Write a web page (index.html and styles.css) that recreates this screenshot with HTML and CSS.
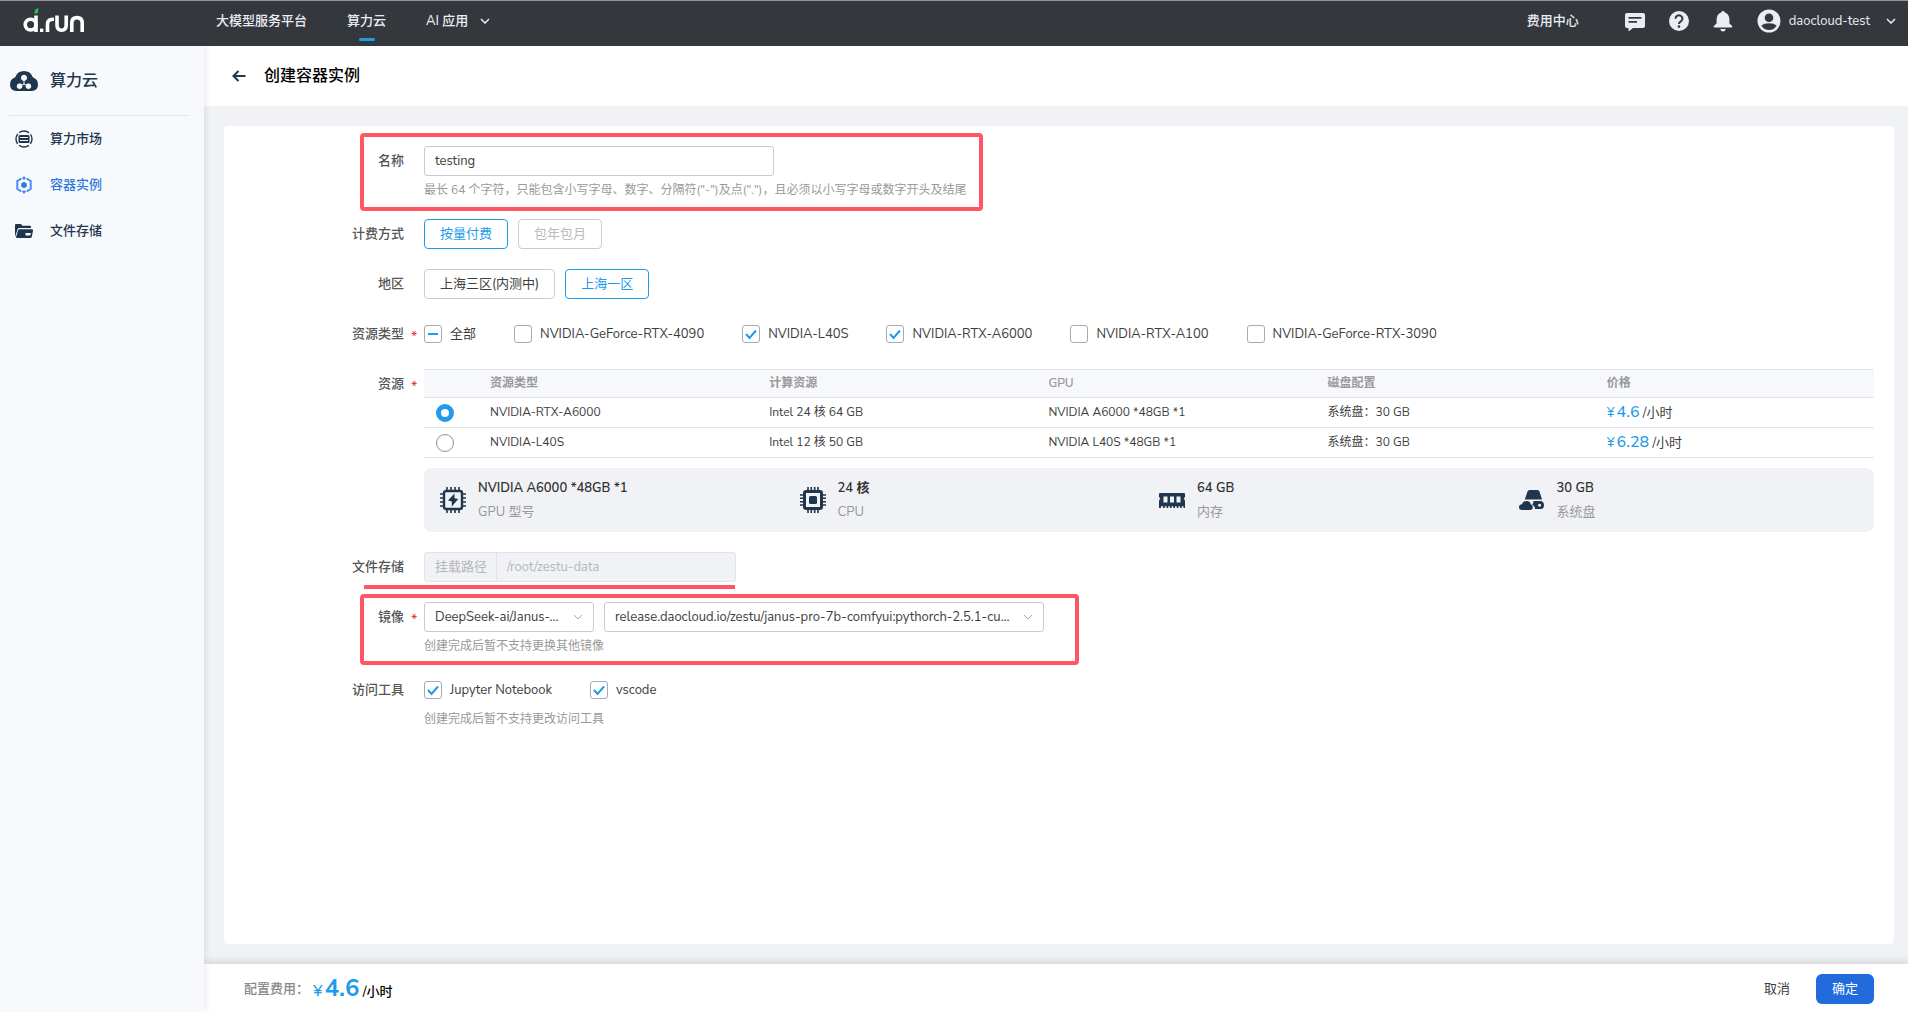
FILE: index.html
```html
<!DOCTYPE html>
<html lang="zh-CN">
<head>
<meta charset="utf-8">
<meta name="viewport" content="width=device-width, initial-scale=1">
<title>创建容器实例 - d.run</title>
<link rel="stylesheet" href="styles.css">
</head>
<body>
<div class="app">
  <header class="topbar">
    <a class="logo" href="#" aria-label="d.run">
      <svg width="64" height="26" viewBox="0 0 64 26" fill="none" stroke="#fff" stroke-width="3.6">
        <circle cx="7.6" cy="16.6" r="5.4"/>
        <path d="M13 7.500V24"/>
        <path d="M11.300 5.500L12.200 1.500 15.600 0 14.600 5.500z" fill="#1fc653" stroke="none"/>
        <path d="M17 20.600h3.300v3.400H17z" fill="#fff" stroke="none"/>
        <path d="M24.500 24v-8q0-5 6.500-4.800"/>
        <path d="M34 7.400v9.600q0 5.200 4.600 5.200t4.600-5.200V7.400"/>
        <path d="M48.800 24v-9q0-5.400 5.200-5.400t5.200 5.400v9"/>
      </svg>
    </a>
    <nav class="mainnav">
      <a href="#">大模型服务平台</a>
      <a href="#" class="active">算力云</a>
      <a href="#">AI 应用
        <svg class="chev" width="10" height="6" viewBox="0 0 10 6"><path d="M1 1l4 4 4-4"/></svg>
      </a>
    </nav>
    <div class="tools">
      <a href="#" class="billing">费用中心</a>
      <button type="button" aria-label="消息">
        <svg width="20" height="20" viewBox="0 0 20 20"><path fill="currentColor" fill-rule="evenodd" d="M2 2h16a2 2 0 0 1 2 2v11a2 2 0 0 1-2 2H8l-4.500 3.500V17H2a2 2 0 0 1-2-2V4a2 2 0 0 1 2-2zm1.500 4v1.700h13V6zm0 4v1.700h8.500V10z"/></svg>
      </button>
      <button type="button" aria-label="帮助">
        <svg width="20" height="20" viewBox="0 0 20 20"><circle cx="10" cy="10" r="10" fill="currentColor"/><path d="M6.500 7.700a3.500 3.300 0 1 1 5.600 2.500Q10 11.400 10 13" fill="none" stroke="#34383d" stroke-width="2"/><circle cx="10" cy="15.600" r="1.300" fill="#34383d"/></svg>
      </button>
      <button type="button" aria-label="通知">
        <svg width="20" height="22" viewBox="0 0 20 22"><path fill="currentColor" d="M10 1q1.600 0 1.900 1.600Q16 4 16.400 9v4.500l2.800 2.600q.5 1.400-.7 1.400h-17q-1.200 0-.7-1.400l2.800-2.600V9Q4 4 8.100 2.600 8.400 1 10 1zM7.200 19h5.600q-.8 2.500-2.800 2.500T7.200 19z"/></svg>
      </button>
      <button type="button" class="user">
        <svg width="24" height="24" viewBox="0 0 24 24"><circle cx="12" cy="12" r="11.500" fill="currentColor"/><circle cx="12" cy="8.800" r="4.300" fill="#34383d"/><path d="M4.300 16.500Q7 14.300 12 14.300t7.700 2.200Q17 21 12 21t-7.700-4.500z" fill="#34383d"/></svg>
        <span>daocloud-test</span>
        <svg class="chev" width="10" height="6" viewBox="0 0 10 6"><path d="M1 1l4 4 4-4"/></svg>
      </button>
    </div>
  </header>

  <aside class="sidebar">
    <h2>
      <svg width="28" height="20" viewBox="0 0 28 20"><path fill="#1f364d" d="M14 0q6.500 0 8.800 6.200Q28 8 28 13.500 28 20 21.500 20h-15Q0 20 0 13.500 0 8 5.200 6.200 7.500 0 14 0z"/><g stroke="#f7f9fd" fill="#f7f9fd"><path d="M14 7v6l-5 2.500M14 13l5 2.500" fill="none"/><circle cx="14" cy="6.800" r="2.600"/><circle cx="9.600" cy="15.200" r="2.400"/><circle cx="18.400" cy="15.200" r="2.400"/></g></svg>
      <span>算力云</span>
    </h2>
    <nav class="sidenav">
      <a href="#">
        <svg width="18" height="18" viewBox="0 0 18 18"><circle cx="9" cy="9" r="8" fill="none" stroke="currentColor" stroke-width="1.400" stroke-dasharray="10.560 2" stroke-dashoffset="5.300"/><path fill="currentColor" fill-rule="evenodd" d="M5 5h8q1.500 0 1.500 1.500v5.500Q14.500 13 13 13H5q-1.500 0-1.500-1.500V6.500Q3.500 5 5 5zM5 6.900v1h8v-1zM5 10.100v1h8v-1z"/></svg>
        <span>算力市场</span>
      </a>
      <a href="#" class="current">
        <svg width="18" height="18" viewBox="0 0 18 18"><path d="M6.300 2.700L2.300 5v8l4 2.300M11.700 2.700l4 2.300v8l-4 2.300" fill="none" stroke="#4a8df0" stroke-width="2"/><path d="M6.800 2.600L9 0l2.200 2.600L9 3.800zM6.800 15.400L9 18l2.200-2.600L9 14.200z" fill="#4a8df0"/><path d="M9 5.800l2.800 1.600v3.200L9 12.200l-2.800-1.600V7.400z" fill="currentColor"/></svg>
        <span>容器实例</span>
      </a>
      <a href="#">
        <svg width="18" height="14" viewBox="0 0 18 14"><path fill="currentColor" fill-rule="evenodd" d="M0 1q0-1 1-1h5l1.500 1.800H15q1 0 1 1V4H4.500Q3 4 2.600 5.300L0 13zM4.800 5.300H17q1.200 0 1 1.200l-1.200 6.300Q16.500 14 15.300 14H2q-1.200 0-.9-1.200L3 6.600Q3.400 5.300 4.800 5.300zM10.500 9v2.600h4.700L16 9z"/></svg>
        <span>文件存储</span>
      </a>
    </nav>
  </aside>

  <main class="main">
    <div class="pagehead">
      <button type="button" aria-label="返回">
        <svg width="14" height="12" viewBox="0 0 14 12"><path d="M13.500 6H1.500M6.500 1l-5 5 5 5" fill="none" stroke="#1f364d" stroke-width="2"/></svg>
      </button>
      <h1>创建容器实例</h1>
    </div>

    <div class="content">
      <form class="card" id="create">
        <div class="row">
          <span class="mark mark-name"></span>
          <label class="lbl" for="name">名称</label>
          <div class="ctl">
            <input class="text" id="name" type="text" value="testing">
            <p class="hint">最长 64 个字符，只能包含小写字母、数字、分隔符("-")及点(".")，且必须以小写字母或数字开头及结尾</p>
          </div>
        </div>

        <div class="row">
          <span class="lbl">计费方式</span>
          <div class="ctl choices">
            <button type="button" class="choice on">按量付费</button>
            <button type="button" class="choice" disabled>包年包月</button>
          </div>
        </div>

        <div class="row">
          <span class="lbl">地区</span>
          <div class="ctl choices">
            <button type="button" class="choice">上海三区(内测中)</button>
            <button type="button" class="choice on">上海一区</button>
          </div>
        </div>

        <div class="row">
          <span class="lbl req">资源类型</span>
          <div class="ctl checks">
            <label><input type="checkbox" class="partial">全部</label>
            <label><input type="checkbox">NVIDIA-GeForce-RTX-4090</label>
            <label><input type="checkbox" checked>NVIDIA-L40S</label>
            <label><input type="checkbox" checked>NVIDIA-RTX-A6000</label>
            <label><input type="checkbox">NVIDIA-RTX-A100</label>
            <label><input type="checkbox">NVIDIA-GeForce-RTX-3090</label>
          </div>
        </div>

        <div class="row">
          <span class="lbl req">资源</span>
          <div class="ctl">
            <table class="grid">
              <thead>
                <tr><th class="pick"></th><th>资源类型</th><th>计算资源</th><th>GPU</th><th>磁盘配置</th><th>价格</th></tr>
              </thead>
              <tbody>
                <tr>
                  <td class="pick"><input type="radio" name="res" aria-label="NVIDIA-RTX-A6000" checked></td>
                  <td>NVIDIA-RTX-A6000</td><td>Intel 24 核 64 GB</td><td>NVIDIA A6000 *48GB *1</td><td>系统盘：30 GB</td>
                  <td class="price"><span class="yen">¥</span><b>4.6</b> /小时</td>
                </tr>
                <tr>
                  <td class="pick"><input type="radio" name="res" aria-label="NVIDIA-L40S"></td>
                  <td>NVIDIA-L40S</td><td>Intel 12 核 50 GB</td><td>NVIDIA L40S *48GB *1</td><td>系统盘：30 GB</td>
                  <td class="price"><span class="yen">¥</span><b>6.28</b> /小时</td>
                </tr>
              </tbody>
            </table>
            <div class="summary">
              <div class="spec">
                <svg width="26" height="26" viewBox="0 0 26 26"><path d="M7 0v26M11 0v26M15 0v26M19 0v26M0 7h26M0 11h26M0 15h26M0 19h26" stroke="#1f364d" stroke-width="1.600"/><rect x="4" y="4" width="18" height="18" rx="2" fill="#f1f2f6" stroke="#1f364d" stroke-width="2.400"/><path d="M14.500 6.500L8 13.500l3.800 1V19.500L18.300 12l-3.800-.8z" fill="#1f364d"/></svg>
                <div><strong>NVIDIA A6000 *48GB *1</strong><span>GPU 型号</span></div>
              </div>
              <div class="spec">
                <svg width="26" height="26" viewBox="0 0 26 26"><path d="M8 0v26M11.300 0v26M14.700 0v26M18 0v26M0 8h26M0 11.300h26M0 14.700h26M0 18h26" stroke="#1f364d" stroke-width="1.600"/><rect x="4.500" y="4.500" width="17" height="17" rx="1.500" fill="#f1f2f6" stroke="#1f364d" stroke-width="3"/><rect x="9" y="9" width="8" height="8" rx="1.500" fill="#1f364d"/></svg>
                <div><strong>24 核</strong><span>CPU</span></div>
              </div>
              <div class="spec">
                <svg width="26" height="26" viewBox="0 0 26 26"><path fill="#1f364d" fill-rule="evenodd" d="M1 6h24q1 0 1 1v3q-2 1.700 0 3.400V21h-1.500v-1.700h-1.700V21h-1.700v-1.700h-1.700V21h-1.700v-1.700H16V21h-1.700v-1.700h-1.700V21h-1.700v-1.700H9.200V21H7.500v-1.700H5.800V21H4.100v-1.700H2V21H0v-7.600Q2 11.700 0 10V7q0-1 1-1zM4.500 9.500v6h4v-6zM11 9.500v6h4v-6zM17.500 9.500v6h4v-6z"/></svg>
                <div><strong>64 GB</strong><span>内存</span></div>
              </div>
              <div class="spec">
                <svg width="26" height="26" viewBox="0 0 26 26"><path fill="#1f364d" fill-rule="evenodd" d="M8.500 4.500Q9 3 10.500 3h8q1.500 0 2 1.500L23 12.500H5.800zM14.500 14H22q3 .7 3 4.300 0 3.700-3 3.700h-6q0-2.500-2.700-4.500 1.200-1.300 1.200-3.500zM20.500 16.700a1.500 1.500 0 1 0 .1 0zM7.500 14q3.500 0 4.300 3.300 2 .7 2 2.900Q13.800 23 11 23H3q-3 0-3-2.800t3-3Q4 14 7.500 14z"/></svg>
                <div><strong>30 GB</strong><span>系统盘</span></div>
              </div>
            </div>
          </div>
        </div>

        <div class="row">
          <span class="mark mark-line"></span>
          <label class="lbl" for="mount">文件存储</label>
          <div class="ctl">
            <div class="addon"><span>挂载路径</span><input id="mount" type="text" value="/root/zestu-data" disabled></div>
          </div>
        </div>

        <div class="row">
          <span class="mark mark-image"></span>
          <label class="lbl req" for="image">镜像</label>
          <div class="ctl">
            <div class="selects">
              <select id="image" class="sel-repo"><option>DeepSeek-ai/Janus-...</option></select>
              <select class="sel-tag" aria-label="镜像版本"><option>release.daocloud.io/zestu/janus-pro-7b-comfyui:pythorch-2.5.1-cu...</option></select>
            </div>
            <p class="hint">创建完成后暂不支持更换其他镜像</p>
          </div>
        </div>

        <div class="row">
          <span class="lbl">访问工具</span>
          <div class="ctl">
            <div class="checks">
              <label><input type="checkbox" checked>Jupyter Notebook</label>
              <label><input type="checkbox" checked>vscode</label>
            </div>
            <p class="hint">创建完成后暂不支持更改访问工具</p>
          </div>
        </div>
      </form>
    </div>

    <footer class="actions">
      <span class="cost">配置费用：</span>
      <span class="total"><span class="yen">¥</span><b>4.6</b> /小时</span>
      <button type="button" class="cancel">取消</button>
      <button type="submit" form="create" class="ok">确定</button>
    </footer>
  </main>
</div>
</body>
</html>
```
FILE: styles.css
```css
:root {
  --ink: #1f364d;
  --text: #3d3d3d;
  --muted: #999;
  --blue: #1f9bea;
  --line: #c8cad8;
  --panel: #f1f2f6;
  --mark: #ff5564;
}

* { box-sizing: border-box; }

body {
  margin: 0;
  font: 13px/20px "Nunito Sans", Nunito, Lato, "Noto Sans CJK SC", sans-serif;
  color: var(--text);
}

h1, h2, p { margin: 0; font-weight: 500; }
a { color: inherit; text-decoration: none; }
svg { flex: none; }
button, input, select { font: inherit; color: inherit; margin: 0; }
button { padding: 0; border: 0; background: none; }

.app {
  display: grid;
  grid-template: 46px 1fr / 204px 1fr;
  min-height: 100vh;
}

/* top bar */
.topbar {
  grid-column: 1 / -1;
  display: flex;
  align-items: center;
  padding: 0 12px 6px 23px;
  border-top: 1px solid #8d9799;
  background: #34383d;
  color: #e9edf5;
}
.logo { width: 193px; height: 26px; }
.mainnav { display: flex; gap: 40px; font-weight: 500; }
.mainnav a { position: relative; display: flex; align-items: center; gap: 12px; }
.mainnav .active::after {
  content: "";
  position: absolute;
  left: 50%;
  bottom: -10px;
  width: 16px;
  height: 3px;
  margin-left: -8px;
  border-radius: 2px;
  background: var(--blue);
}
.chev path { fill: none; stroke: currentColor; stroke-width: 1.5; }
.tools { display: flex; align-items: center; gap: 24px; margin-left: auto; }
.tools button { display: flex; align-items: center; }
.billing { margin-right: 22px; font-weight: 500; }
.tools .user { gap: 8px; }
.user .chev { margin-left: 8px; }

/* side bar */
.sidebar {
  padding: 20px 15px 0 9px;
  background: #f7f9fd;
  color: var(--ink);
  box-shadow: 0 0 8px rgba(0, 0, 0, .12);
  clip-path: inset(0 -10px 0 0);
  z-index: 1;
}
.sidebar h2 {
  display: flex;
  align-items: center;
  gap: 12px;
  height: 50px;
  padding: 0 0 20px 1px;
  border-bottom: 1px solid #e2e5ea;
  font-size: 16px;
}
.sidenav a {
  display: flex;
  align-items: center;
  gap: 17px;
  height: 46px;
  padding-left: 6px;
  font-weight: 500;
}
.sidenav .current { color: #3079dc; }

/* page */
.main { display: grid; grid-template-rows: 60px 1fr 48px; min-width: 0; }
.pagehead { display: flex; align-items: center; gap: 18px; padding-left: 28px; }
.pagehead h1 { font-size: 16px; color: #000; }
.pagehead button { display: flex; }
.content { display: flex; padding: 20px 14px 20px 20px; background: var(--panel); }
.card {
  flex: 1;
  min-width: 0;
  display: flex;
  flex-direction: column;
  gap: 20px;
  padding: 20px 20px 20px 0;
  border-radius: 4px;
  background: #fff;
}

.row { position: relative; display: grid; grid-template-columns: 180px 1fr; column-gap: 20px; }
.lbl { position: relative; height: 30px; line-height: 30px; text-align: right; font-weight: 500; color: #555; }
.req::after { content: "*"; position: absolute; right: -13px; top: 3px; color: #e53935; }
.hint { padding: 5px 0 0; font-size: 12px; line-height: 18px; font-weight: 400; color: var(--muted); }

.text { display: block; width: 350px; height: 30px; padding: 0 10px; border: 1px solid var(--line); border-radius: 3px; }

.choices, .selects { display: flex; gap: 10px; }
.choice { height: 30px; padding: 0 15px; border: 1px solid var(--line); border-radius: 4px; background: #fff; }
.choice.on { border-color: var(--blue); color: var(--blue); }
.choice:disabled { color: #bbb; }

.checks { display: flex; gap: 38px; height: 30px; }
.checks label { display: flex; align-items: center; gap: 8px; }
input[type="checkbox"] {
  appearance: none;
  width: 18px;
  height: 18px;
  border: 1px solid #a5a9b5;
  border-radius: 3px;
  background: #fff center / 16px 16px no-repeat;
}
input[type="checkbox"]:checked {
  background-image: url("data:image/svg+xml,%3Csvg xmlns='http://www.w3.org/2000/svg' viewBox='0 0 16 16'%3E%3Cpath d='M3 8l3.500 4L13 4.500' fill='none' stroke='%231f9bea' stroke-width='2'/%3E%3C/svg%3E");
}
input.partial {
  background-image: url("data:image/svg+xml,%3Csvg xmlns='http://www.w3.org/2000/svg' viewBox='0 0 16 16'%3E%3Cpath d='M3 8h10' stroke='%231f9bea' stroke-width='2'/%3E%3C/svg%3E");
}

/* resource table */
.grid { width: 100%; border-collapse: collapse; table-layout: fixed; font-size: 12px; line-height: 18px; }
.grid th, .grid td { height: 30px; padding: 0 0 1px 12px; text-align: left; border-bottom: 1px solid #e3e4ea; }
.grid th { height: 28px; border-top: 1px solid #e3e4ea; background: #f7f8fb; font-weight: 600; color: var(--muted); }
.grid .pick { width: 54px; padding-bottom: 0; }
.grid input {
  appearance: none;
  display: block;
  width: 18px;
  height: 18px;
  border: 1px solid #8f9299;
  border-radius: 50%;
}
.grid input:checked { border: 5px solid var(--blue); }
.yen, .price b, .total b { color: var(--blue); }
.grid .price { padding-bottom: 0; font-size: 13px; }
.price b { font-size: 16px; font-weight: 500; }
.price .yen { margin-right: 2px; }

.summary {
  display: grid;
  grid-template-columns: repeat(4, 1fr);
  column-gap: 20px;
  height: 64px;
  margin-top: 10px;
  padding: 0 16px;
  border-radius: 8px;
  background: var(--panel);
}
.spec { display: flex; align-items: center; gap: 12px; line-height: 24px; }
.spec strong, .spec span { display: block; }
.spec strong { font-weight: 600; color: #333; }
.spec span { color: var(--muted); }

.addon {
  display: flex;
  width: 312px;
  height: 30px;
  line-height: 28px;
  border: 1px solid #e1e3ea;
  border-radius: 3px;
  background: var(--panel);
  color: #b5b7bb;
}
.addon span { padding: 0 9px 0 10px; border-right: 1px solid #e1e3ea; }
.addon input { flex: 1; min-width: 0; padding: 0 10px; border: 0; background: none; }

select {
  appearance: none;
  height: 30px;
  padding: 0 24px 0 10px;
  border: 1px solid var(--line);
  border-radius: 3px;
  background: #fff url("data:image/svg+xml,%3Csvg xmlns='http://www.w3.org/2000/svg' viewBox='0 0 10 6'%3E%3Cpath d='M1 1l4 4 4-4' fill='none' stroke='%23a5a9b5'/%3E%3C/svg%3E") right 10px center / 10px 6px no-repeat;
}
.sel-repo { width: 170px; }
.sel-tag { width: 440px; }

/* red highlights drawn over the form */
.mark { position: absolute; left: 136px; pointer-events: none; }
.mark-name, .mark-image { border: 4px solid var(--mark); border-radius: 4px; }
.mark-name { top: -13px; width: 623px; height: 78px; }
.mark-image { top: -8px; width: 719px; height: 71px; }
.mark-line { left: 140px; top: 33px; width: 371px; height: 4px; background: var(--mark); }

/* footer */
.actions {
  display: flex;
  align-items: center;
  padding: 2px 34px 0 40px;
  background: #fff;
  box-shadow: 0 -2px 8px rgba(0, 0, 0, .14);
}
.cost { color: #888; font-weight: 500; }
.total { margin-right: auto; padding: 2px 0 0 4px; font-weight: 500; color: #000; line-height: 24px; }
.total b { font-size: 24px; font-weight: 700; }
.total .yen { margin-right: 2px; font-size: 16px; }
.cancel { margin-right: 26px; }
.ok { width: 58px; height: 30px; border-radius: 6px; background: #216bdc; color: #fff; }
```
